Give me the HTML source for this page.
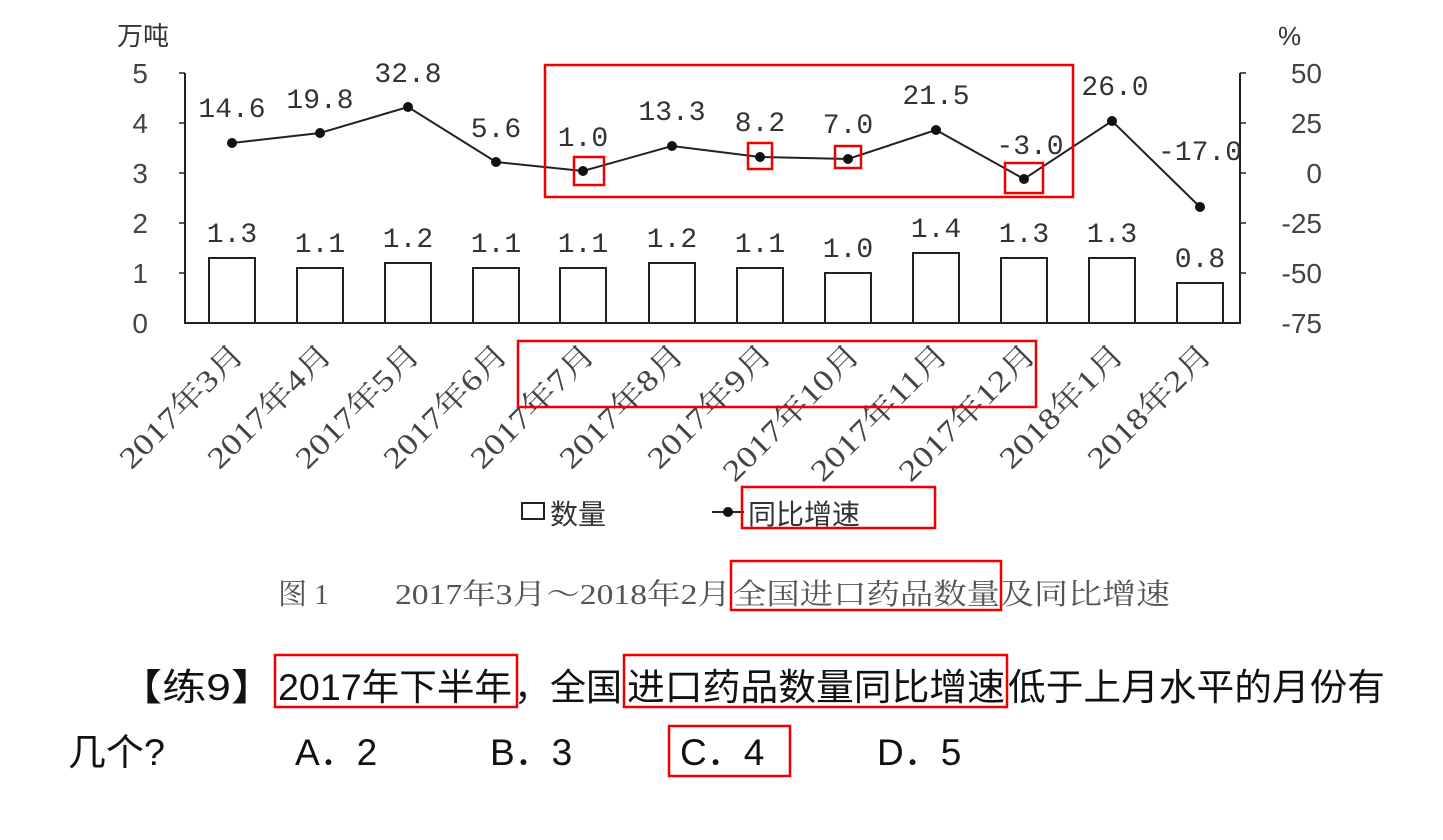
<!DOCTYPE html>
<html><head><meta charset="utf-8"><style>
html,body{margin:0;padding:0;background:#fff;width:1443px;height:840px;overflow:hidden}
svg{display:block}
</style></head><body>
<svg width="1443" height="840" xmlns="http://www.w3.org/2000/svg" font-family="'Liberation Serif','Noto Serif CJK SC',serif">
<g fill="#333" font-size="28">
<text x="117" y="45" font-family="'Liberation Sans','Noto Sans CJK SC',sans-serif" font-size="26">万吨</text>
<text x="1278" y="45" font-family="'Liberation Sans','Noto Sans CJK SC',sans-serif" font-size="26">%</text>
<g text-anchor="end" font-size="28" font-family="'Liberation Sans',sans-serif" fill="#444">
<text x="148" y="83">5</text><text x="148" y="133">4</text><text x="148" y="183">3</text><text x="148" y="233">2</text><text x="148" y="283">1</text><text x="148" y="333">0</text>
<text x="1322" y="83">50</text><text x="1322" y="133">25</text><text x="1322" y="183">0</text><text x="1322" y="233">-25</text><text x="1322" y="283">-50</text><text x="1322" y="333">-75</text>
</g>
</g>
<g stroke="#222" stroke-width="2" fill="none">
<line x1="185" y1="73" x2="185" y2="324"/>
<line x1="1240" y1="73" x2="1240" y2="324"/>
<line x1="185" y1="323" x2="1240" y2="323"/>
<g stroke-width="1.5">
<line x1="179" y1="73" x2="185" y2="73"/><line x1="179" y1="123" x2="185" y2="123"/><line x1="179" y1="173" x2="185" y2="173"/><line x1="179" y1="223" x2="185" y2="223"/><line x1="179" y1="273" x2="185" y2="273"/>
<line x1="1240" y1="73" x2="1246" y2="73"/><line x1="1240" y1="123" x2="1246" y2="123"/><line x1="1240" y1="173" x2="1246" y2="173"/><line x1="1240" y1="223" x2="1246" y2="223"/><line x1="1240" y1="273" x2="1246" y2="273"/>
</g>
<rect x="209" y="258" width="46" height="65"/>
<rect x="297" y="268" width="46" height="55"/>
<rect x="385" y="263" width="46" height="60"/>
<rect x="473" y="268" width="46" height="55"/>
<rect x="560" y="268" width="46" height="55"/>
<rect x="649" y="263" width="46" height="60"/>
<rect x="737" y="268" width="46" height="55"/>
<rect x="825" y="273" width="46" height="50"/>
<rect x="913" y="253" width="46" height="70"/>
<rect x="1001" y="258" width="46" height="65"/>
<rect x="1089" y="258" width="46" height="65"/>
<rect x="1177" y="283" width="46" height="40"/>
<polyline points="232,143 320,133 408,107 496,162 583,171 672,146 760,157 848,159 936,130 1024,179 1112,121 1200,207"/>
</g>
<g fill="#111">
<circle cx="232" cy="143" r="5"/><circle cx="320" cy="133" r="5"/><circle cx="408" cy="107" r="5"/><circle cx="496" cy="162" r="5"/><circle cx="583" cy="171" r="5"/><circle cx="672" cy="146" r="5"/><circle cx="760" cy="157" r="5"/><circle cx="848" cy="159" r="5"/><circle cx="936" cy="130" r="5"/><circle cx="1024" cy="179" r="5"/><circle cx="1112" cy="121" r="5"/><circle cx="1200" cy="207" r="5"/>
</g>
<g font-family="'Liberation Mono',monospace" font-size="28" fill="#333" text-anchor="middle">
<text x="232" y="117">14.6</text><text x="320" y="108">19.8</text><text x="408" y="82">32.8</text><text x="496" y="137">5.6</text><text x="583" y="146">1.0</text><text x="672" y="120">13.3</text><text x="760" y="131">8.2</text><text x="848" y="133">7.0</text><text x="936" y="104">21.5</text><text x="1030" y="154">-3.0</text><text x="1115" y="95">26.0</text><text x="1200" y="160">-17.0</text>
<text x="232" y="242">1.3</text><text x="320" y="252">1.1</text><text x="408" y="247">1.2</text><text x="496" y="252">1.1</text><text x="583" y="252">1.1</text><text x="672" y="247">1.2</text><text x="760" y="252">1.1</text><text x="848" y="257">1.0</text><text x="936" y="237">1.4</text><text x="1024" y="242">1.3</text><text x="1112" y="242">1.3</text><text x="1200" y="267">0.8</text>
</g>
<g font-size="30" fill="#444" text-anchor="end">
<text transform="translate(246,356) rotate(-45)" textLength="162" lengthAdjust="spacingAndGlyphs">2017年3月</text>
<text transform="translate(334,356) rotate(-45)" textLength="162" lengthAdjust="spacingAndGlyphs">2017年4月</text>
<text transform="translate(422,356) rotate(-45)" textLength="162" lengthAdjust="spacingAndGlyphs">2017年5月</text>
<text transform="translate(510,356) rotate(-45)" textLength="162" lengthAdjust="spacingAndGlyphs">2017年6月</text>
<text transform="translate(597,356) rotate(-45)" textLength="162" lengthAdjust="spacingAndGlyphs">2017年7月</text>
<text transform="translate(686,356) rotate(-45)" textLength="162" lengthAdjust="spacingAndGlyphs">2017年8月</text>
<text transform="translate(774,356) rotate(-45)" textLength="162" lengthAdjust="spacingAndGlyphs">2017年9月</text>
<text transform="translate(862,356) rotate(-45)" textLength="180" lengthAdjust="spacingAndGlyphs">2017年10月</text>
<text transform="translate(950,356) rotate(-45)" textLength="180" lengthAdjust="spacingAndGlyphs">2017年11月</text>
<text transform="translate(1038,356) rotate(-45)" textLength="180" lengthAdjust="spacingAndGlyphs">2017年12月</text>
<text transform="translate(1126,356) rotate(-45)" textLength="162" lengthAdjust="spacingAndGlyphs">2018年1月</text>
<text transform="translate(1214,356) rotate(-45)" textLength="162" lengthAdjust="spacingAndGlyphs">2018年2月</text>
</g>
<rect x="522" y="503" width="22" height="16" fill="none" stroke="#222" stroke-width="2"/>
<text x="550" y="524" font-size="28" fill="#333" font-family="'Liberation Sans','Noto Sans CJK SC',sans-serif">数量</text>
<line x1="712" y1="512" x2="744" y2="512" stroke="#222" stroke-width="2"/><circle cx="728" cy="512" r="5" fill="#111"/>
<text x="748" y="524" font-size="28" fill="#333" font-family="'Liberation Sans','Noto Sans CJK SC',sans-serif">同比增速</text>
<g font-size="29" fill="#555">
<text x="278" y="604">图 1</text>
<text x="395" y="604" textLength="336" lengthAdjust="spacingAndGlyphs">2017年3月～2018年2月</text>
<text x="733" y="604" textLength="267" lengthAdjust="spacingAndGlyphs">全国进口药品数量</text>
<text x="1000" y="604" textLength="170" lengthAdjust="spacingAndGlyphs">及同比增速</text>
</g>
<g font-family="'Liberation Sans','Noto Sans CJK SC',sans-serif" font-size="37" fill="#111">
<text x="118" y="700" textLength="157" lengthAdjust="spacingAndGlyphs">【练9】</text>
<text x="278" y="700" textLength="234" lengthAdjust="spacingAndGlyphs">2017年下半年</text>
<text x="514" y="700" textLength="108" lengthAdjust="spacingAndGlyphs">，全国</text>
<text x="627" y="700" textLength="378" lengthAdjust="spacingAndGlyphs">进口药品数量同比增速</text>
<text x="1008" y="700" textLength="377" lengthAdjust="spacingAndGlyphs">低于上月水平的月份有</text>
<text x="68" y="765" textLength="97" lengthAdjust="spacingAndGlyphs">几个?</text>
<text x="295" y="765">A．2</text><text x="490" y="765">B．3</text><text x="680" y="765">C．4</text><text x="877" y="765">D．5</text>
</g>
<g fill="none" stroke="#e00" stroke-width="2.5">
<rect x="545" y="65" width="528" height="132"/>
<rect x="574" y="157" width="30" height="28"/>
<rect x="748" y="143" width="24" height="26"/>
<rect x="835" y="146" width="26" height="22"/>
<rect x="1005" y="163" width="38" height="30"/>
<rect x="518" y="341" width="518" height="66"/>
<rect x="742" y="487" width="193" height="41"/>
<rect x="731" y="561" width="270" height="49"/>
<rect x="275" y="655" width="242" height="52"/>
<rect x="624" y="655" width="383" height="52"/>
<rect x="669" y="726" width="121" height="50"/>
</g>
</svg>
</body></html>
